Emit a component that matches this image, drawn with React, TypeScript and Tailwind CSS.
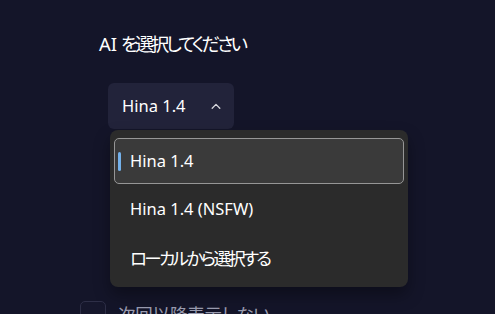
import { useState } from "react";

const models = [
  { label: "Hina 1.4", cjk: false },
  { label: "Hina 1.4 (NSFW)", cjk: false },
  { label: "ローカルから選択する", cjk: true },
];

function ChevronUp() {
  return (
    <svg width="10" height="6" viewBox="0 0 10 6" fill="none">
      <path d="M1.2 5.2L5 1.4l3.8 3.8" stroke="#d6d6dc" strokeWidth="1.3" strokeLinecap="round" strokeLinejoin="round" />
    </svg>
  );
}

export default function App() {
  const [selected] = useState(0);

  return (
    <div className="h-[314px] w-[495px] overflow-hidden bg-[#141529] pl-[80px] pt-[32px] font-['Noto_Sans','Noto_Sans_CJK_JP',sans-serif] text-[17.5px] text-white [font-feature-settings:'palt']">
      <p className="pl-[19px] text-[18.5px] leading-[24px]">
        AI<span className="ml-[4px] tracking-[-3px]">を選択してください</span>
      </p>

      <div className="relative ml-[28px] mt-[27px] w-fit">
        <button className="flex h-[46px] w-[126px] items-center gap-[25px] rounded-[6px] bg-[#22233a] pl-[14px] text-[16.5px]">
          <span>Hina 1.4</span>
          <ChevronUp />
        </button>

        <div className="absolute left-[2px] top-[47px] z-10 flex w-[298px] flex-col gap-[2.5px] rounded-[8px] bg-[#2b2b2b] px-[4px] pb-[6px] pt-[8px] shadow-[0_8px_16px_rgba(0,0,0,0.35)]">
          {models.map((m, i) => (
            <div
              key={m.label}
              className={
                i === selected
                  ? "relative flex h-[46px] items-center rounded-[5px] border border-[#969696] bg-[#3a3a3a] pl-[15px] text-[16.5px]"
                  : "relative flex h-[46px] items-center rounded-[5px] pl-[16px] text-[16.5px]"
              }
            >
              {i === selected && (
                <span className="absolute left-[2.5px] top-[13px] h-[19px] w-[3px] rounded-full bg-[#74b1ea]" />
              )}
              <span className={m.cjk ? "text-[17.5px] tracking-[-2.6px]" : ""}>{m.label}</span>
            </div>
          ))}
        </div>
      </div>

      <label className="mt-[172px] flex items-center gap-[12px]">
        <span className="h-[26px] w-[26px] shrink-0 rounded-[5px] border border-[#2e2f47] bg-[#16172c]" />
        <span className="leading-[24px] tracking-[-0.2px] text-[#9a9cb0]">次回以降表示しない</span>
      </label>
    </div>
  );
}
